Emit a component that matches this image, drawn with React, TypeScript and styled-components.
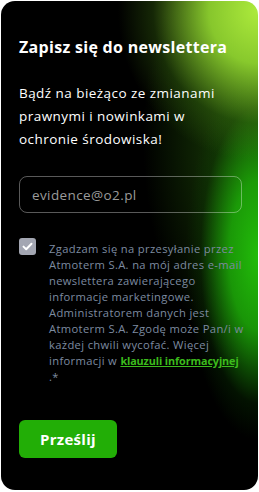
import React from 'react';
import styled, { createGlobalStyle } from 'styled-components';

const GlobalStyle = createGlobalStyle`
  html, body {
    margin: 0;
    padding: 0;
    background: #fff;
  }
  body {
    font-family: 'Open Sans', 'Liberation Sans', sans-serif;
  }
`;

const Card = styled.section`
  box-sizing: border-box;
  margin: 1px;
  width: 257px;
  height: 489px;
  border-radius: 14px;
  overflow: hidden;
  padding: 33px 18px 0 18px;
  display: flex;
  flex-direction: column;
  background:
    radial-gradient(ellipse 140px 150px at 100% 2%, rgba(172, 234, 60, 1) 0%, rgba(152, 222, 50, 0.88) 35%, rgba(70, 130, 20, 0.3) 75%, rgba(0, 0, 0, 0) 100%),
    radial-gradient(ellipse 72px 185px at 100% 52%, rgba(34, 188, 10, 1) 0%, rgba(28, 168, 8, 0.88) 40%, rgba(10, 60, 3, 0.3) 80%, rgba(0, 0, 0, 0) 100%),
    radial-gradient(ellipse 115px 230px at 100% 28%, rgba(60, 150, 15, 0.5) 0%, rgba(0, 0, 0, 0) 100%),
    #000;
`;

const Title = styled.h2`
  margin: 0;
  color: #fff;
  font-size: 16px;
  font-weight: 700;
  line-height: 26px;
  letter-spacing: 0.3px;
`;

const Lead = styled.p`
  margin: 22px 0 0 0;
  color: #fff;
  font-size: 13.5px;
  line-height: 23px;
  font-weight: 400;
  letter-spacing: 0.45px;
`;

const Input = styled.input`
  box-sizing: border-box;
  margin-top: 25px;
  width: 223px;
  height: 37px;
  border-radius: 8px;
  border: 1px solid rgba(255, 255, 255, 0.35);
  background: transparent;
  padding: 0 12px;
  font-family: inherit;
  font-size: 13.5px;
  letter-spacing: 0.4px;
  color: #fff;
  outline: none;
  &::placeholder {
    color: #9b9b9b;
  }
`;

const Consent = styled.label`
  margin-top: 25px;
  display: flex;
  gap: 13px;
  align-items: flex-start;
`;

const Box = styled.span`
  flex: 0 0 17px;
  width: 17px;
  height: 17px;
  border-radius: 3px;
  background: #a3a6b2;
  display: flex;
  align-items: center;
  justify-content: center;
`;

const ConsentText = styled.span`
  display: flex;
  flex-direction: column;
  color: #7d8ba0;
  font-size: 11.2px;
  line-height: 16px;
  letter-spacing: 0.35px;
  margin-top: 3px;
  white-space: nowrap;
  a {
    color: #3cbb1c;
    font-weight: 700;
    font-size: 10.8px;
    text-decoration: underline;
    letter-spacing: -0.1px;
  }
`;

const Line = styled.span`
  display: block;
`;

const Submit = styled.button`
  margin-top: 35px;
  width: 98px;
  height: 38px;
  border: none;
  border-radius: 6px;
  background: #22ae06;
  color: #fff;
  font-family: inherit;
  font-size: 15px;
  font-weight: 700;
  letter-spacing: 0.3px;
  cursor: pointer;
`;

const consentLines = [
  'Zgadzam się na przesyłanie przez',
  'Atmoterm S.A. na mój adres e-mail',
  'newslettera zawierającego',
  'informacje marketingowe.',
  'Administratorem danych jest',
  'Atmoterm S.A. Zgodę może Pan/i w',
  'każdej chwili wycofać. Więcej',
];

export default function App() {
  return (
    <>
      <GlobalStyle />
      <Card>
        <Title>Zapisz się do newslettera</Title>
        <Lead>
          Bądź na bieżąco ze zmianami
          <br />
          prawnymi i nowinkami w
          <br />
          ochronie środowiska!
        </Lead>
        <Input type="email" placeholder="evidence@o2.pl" />
        <Consent>
          <Box>
            <svg width="11" height="9" viewBox="0 0 11 9">
              <path d="M1.5 4.6 L4.2 7.2 L9.5 1.8" fill="none" stroke="#fff" strokeWidth="2" strokeLinecap="round" strokeLinejoin="round" />
            </svg>
          </Box>
          <ConsentText>
            {consentLines.map((l) => (
              <Line key={l}>{l}</Line>
            ))}
            <Line>
              informacji w <a href="#">klauzuli informacyjnej</a>
            </Line>
            <Line>.*</Line>
          </ConsentText>
        </Consent>
        <Submit type="button">Prześlij</Submit>
      </Card>
    </>
  );
}
